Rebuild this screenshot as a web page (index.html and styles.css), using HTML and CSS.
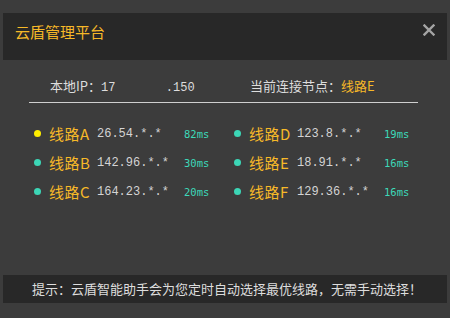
FILE: index.html
```html
<!DOCTYPE html>
<html lang="zh-CN">
<head>
<title>云盾管理平台</title>
<meta charset="utf-8">
<link rel="stylesheet" href="styles.css">
</head>
<body>

<div class="head_box">
	<h1 class="tit">云盾管理平台</h1>
	<svg class="btn_close" width="12" height="12" viewBox="0 0 12 12"><path d="M1.5 1.5 L10.5 10.5 M10.5 1.5 L1.5 10.5" stroke="#a4a4a4" stroke-width="2.4" stroke-linecap="square"/></svg>
</div>

<div class="info_box">
	<p class="txt_ip">本地IP：<span class="num">17&nbsp;&nbsp;&nbsp;&nbsp;&nbsp;&nbsp;&nbsp;.150</span></p>
	<p class="txt_node">当前连接节点：<em>线路E</em></p>
</div>

<ul class="line_list">
	<li class="on"><i class="dot"></i><span class="name">线路A</span><span class="ip">26.54.*.*</span><span class="ms">82ms</span></li>
	<li><i class="dot"></i><span class="name">线路D</span><span class="ip">123.8.*.*</span><span class="ms">19ms</span></li>
	<li><i class="dot"></i><span class="name">线路B</span><span class="ip">142.96.*.*</span><span class="ms">30ms</span></li>
	<li><i class="dot"></i><span class="name">线路E</span><span class="ip">18.91.*.*</span><span class="ms">16ms</span></li>
	<li><i class="dot"></i><span class="name">线路C</span><span class="ip">164.23.*.*</span><span class="ms">20ms</span></li>
	<li><i class="dot"></i><span class="name">线路F</span><span class="ip">129.36.*.*</span><span class="ms">16ms</span></li>
</ul>

<div class="foot_box">
	<p>提示：云盾智能助手会为您定时自动选择最优线路，无需手动选择！</p>
</div>

</body>
</html>
```

FILE: styles.css
```css
body,div,p,ul,li,h1,span,em,i{margin:0;padding:0;}
html,body{height:100%;}
body{display:flex;flex-direction:column;background:#3c3c3c;font-family:"Noto Sans CJK SC","Liberation Sans",sans-serif;font-size:13px;color:#ddd;}
li{list-style:none;}
em,i{font-style:normal;}

.head_box{display:flex;justify-content:space-between;align-items:flex-start;height:47px;margin:13px 3px 0;background:#282828;}
.head_box .tit{padding:10px 0 0 12px;font-size:15px;font-weight:normal;line-height:18px;color:#f7b928;}
.head_box .btn_close{margin:11px 12px 0 0;}

.info_box{display:grid;grid-template-columns:200px 189px;margin:16px 32px 0 29px;padding-bottom:4px;border-bottom:1px solid #cfcfcf;line-height:20px;}
.info_box p{padding-left:21px;}
.info_box .num{font-family:"Liberation Mono",monospace;font-size:12px;}
.info_box em{color:#f7b928;}

.line_list{display:grid;grid-template-columns:200px 200px;grid-auto-rows:29px;margin:16px 0 0 34px;}
.line_list li{display:flex;align-items:center;}
.line_list .dot{width:7px;height:7px;margin-right:8px;border-radius:50%;background:#3cd6b6;}
.line_list .on .dot{background:#ffee00;}
.line_list .name{width:48px;font-size:15px;letter-spacing:0.5px;color:#f7b928;}
.line_list .ip{width:87px;font-family:"Liberation Mono",monospace;font-size:12px;color:#d4d4d4;}
.line_list .ms{font-family:"DejaVu Sans Mono",monospace;font-size:10.5px;color:#3dd9b9;}

.foot_box{margin:auto 3px 15px;height:28px;background:#282828;text-align:center;line-height:28px;}
.foot_box p{padding-left:4px;font-size:13px;color:#ddd;}
```
